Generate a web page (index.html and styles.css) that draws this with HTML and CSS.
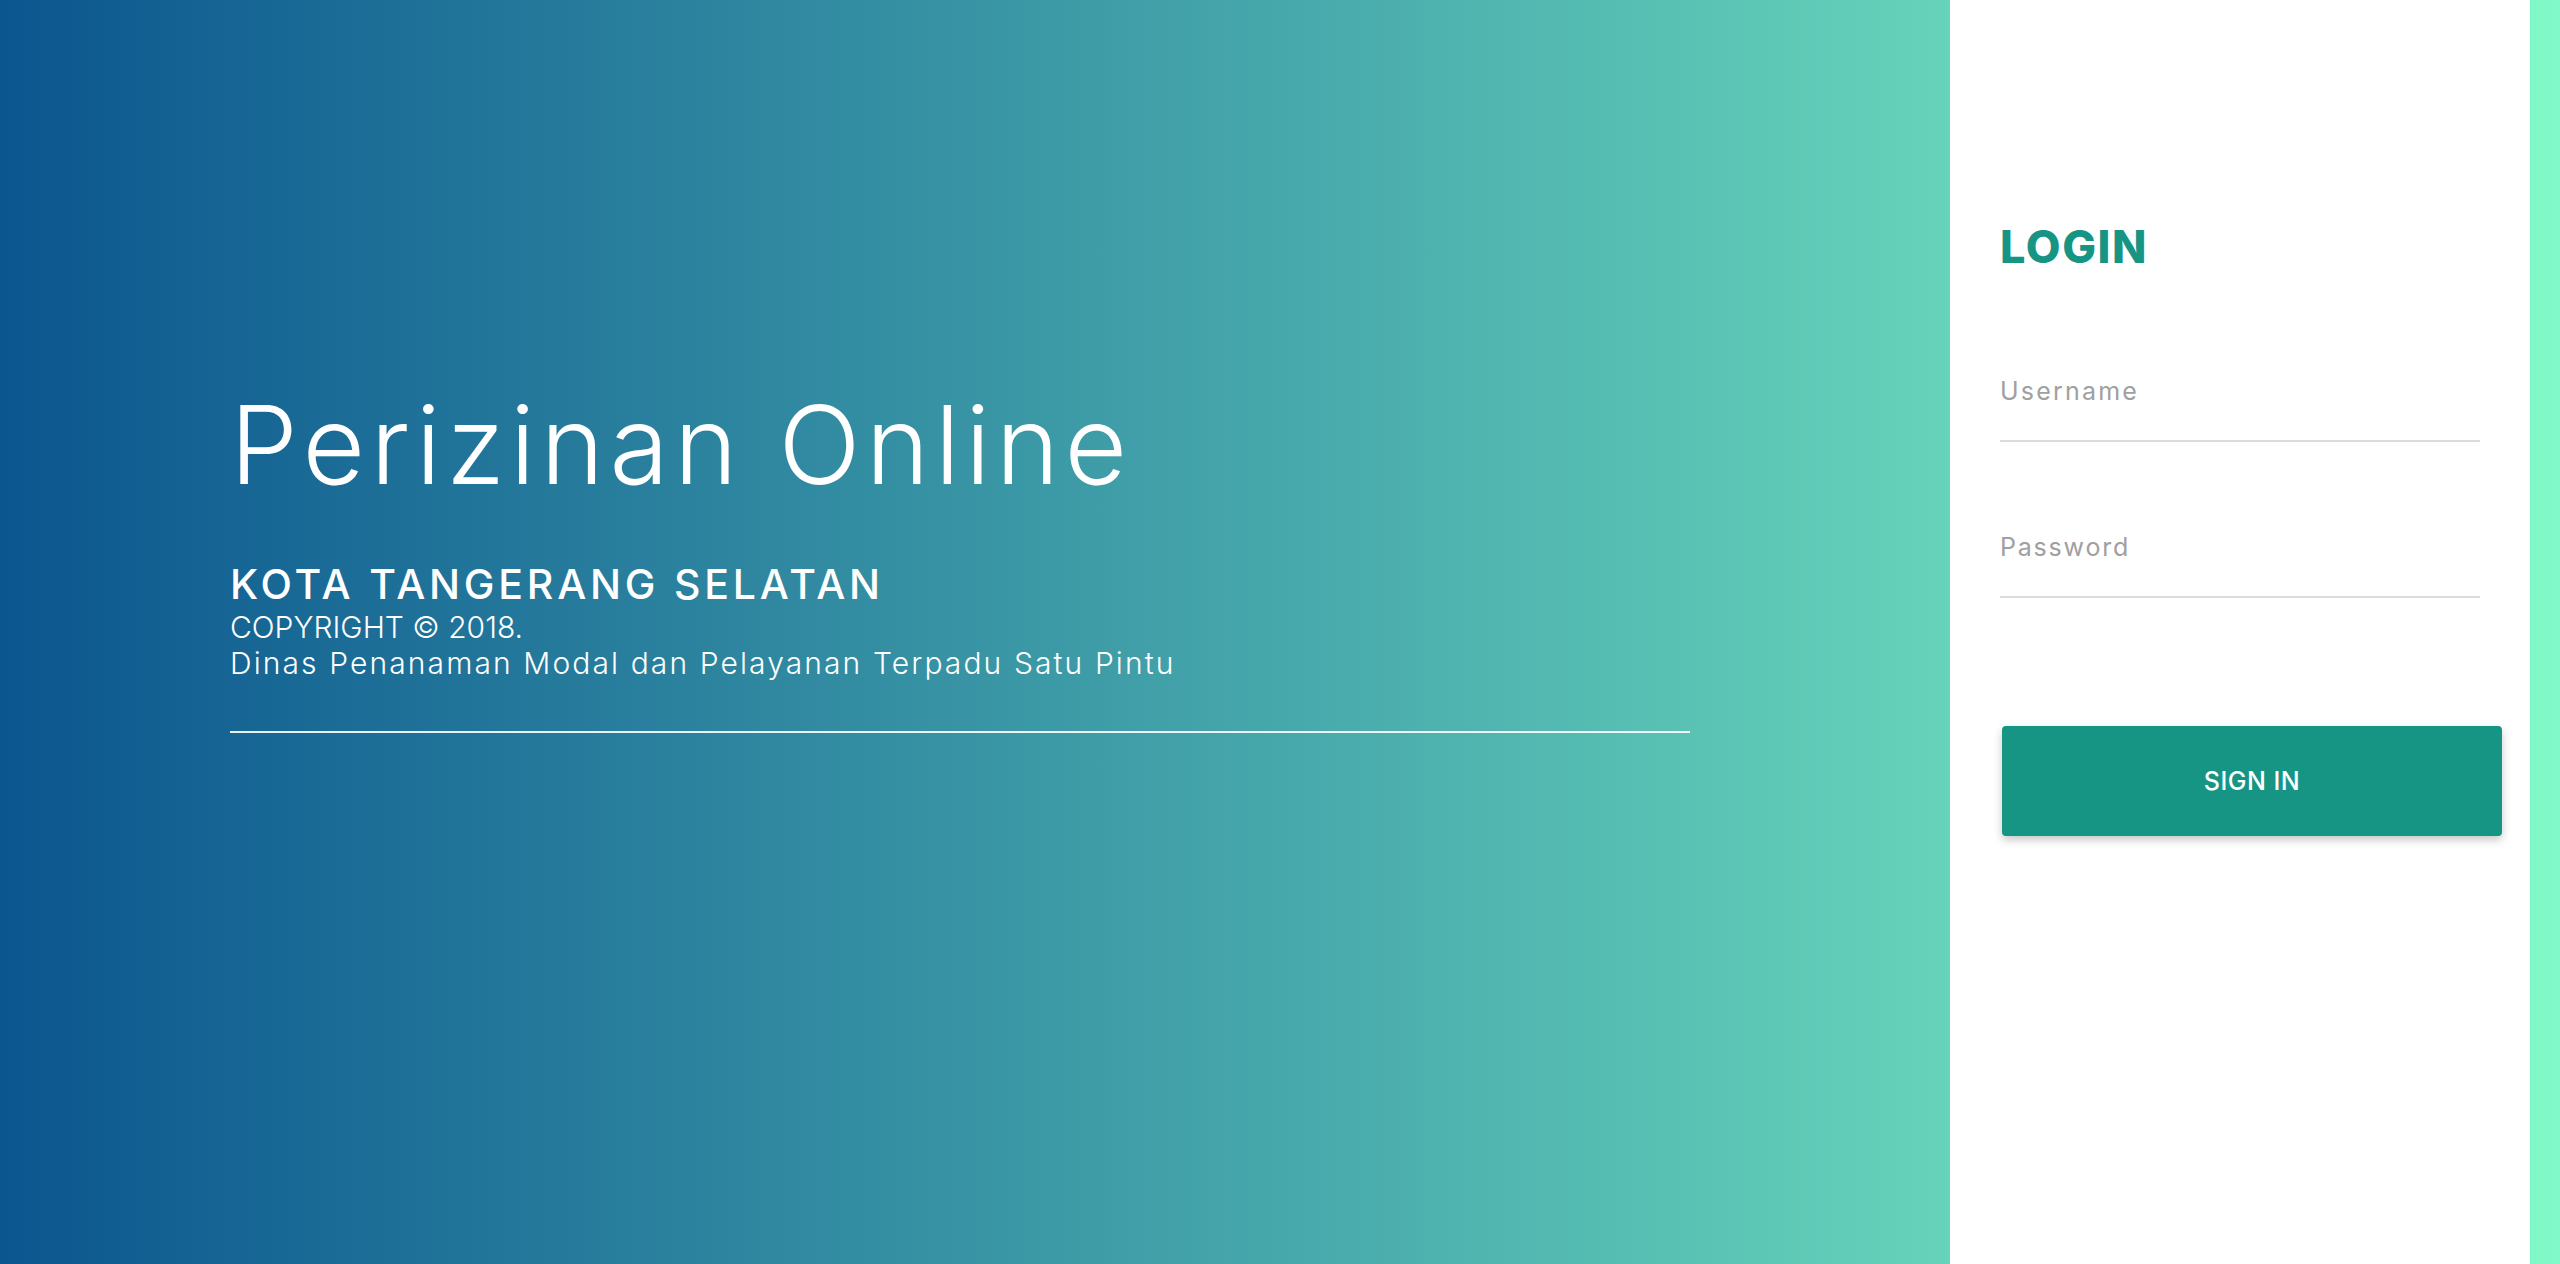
FILE: index.html
```html
<!DOCTYPE html>
<html lang="id">
<head>
<meta charset="utf-8">
<title>Perizinan Online - Login</title>
<link rel="stylesheet" href="styles.css">
</head>
<body>
<div class="page">
  <section class="hero">
    <div class="hero-inner">
      <h1 class="hero-title">Perizinan Online</h1>
      <div class="hero-city">KOTA TANGERANG SELATAN</div>
      <div class="hero-copy hero-copy-year">COPYRIGHT © 2018.</div>
      <div class="hero-copy">Dinas Penanaman Modal dan Pelayanan Terpadu Satu Pintu</div>
      <div class="hero-rule"></div>
    </div>
  </section>
  <aside class="panel">
    <h2 class="panel-title">LOGIN</h2>
    <form class="login-form">
      <input class="field field-user" type="text" placeholder="Username">
      <input class="field field-pass" type="password" placeholder="Password">
      <button class="btn" type="button">SIGN IN</button>
    </form>
  </aside>
</div>
</body>
</html>
```
FILE: styles.css
```css
* { box-sizing: border-box; }
html, body { margin: 0; padding: 0; height: 100%; }
body {
  font-family: Inter, "Noto Sans", "Liberation Sans", sans-serif;
  background: linear-gradient(to right, #0b568f 0%, #66d3ba 76.2%, #82f9c8 100%);
  overflow: hidden;
}
.page {
  display: flex;
  height: 1264px;
  padding-right: 30px;
}
.hero {
  flex: 1;
  display: flex;
  align-items: center;
  padding-left: 230px;
  padding-bottom: 151px;
  color: #fff;
}
.hero-inner { width: 1460px; }
.hero-title {
  margin: 0;
  font-size: 108px;
  line-height: 130px;
  font-weight: 300;
  letter-spacing: 5.3px;
}
.hero-city {
  margin-top: 49px;
  font-size: 41px;
  line-height: 50px;
  font-weight: 500;
  letter-spacing: 3.8px;
}
.hero-copy {
  font-size: 30px;
  line-height: 36px;
  font-weight: 300;
  letter-spacing: 2.1px;
}
.hero-copy-year { letter-spacing: 0; }
.hero-rule {
  margin-top: 50px;
  height: 2px;
  background: rgba(255,255,255,0.9);
}
.panel {
  width: 580px;
  background: #fff;
  padding: 220px 28px 0 50px;
}
.panel-title {
  margin: 0;
  font-size: 45px;
  line-height: 54px;
  font-weight: 800;
  color: #169584;
  letter-spacing: 1.6px;
}
.login-form {
  display: flex;
  flex-direction: column;
  align-items: flex-start;
  margin-top: 97px;
}
.field {
  display: block;
  width: 480px;
  height: 71px;
  padding: 0 0 29px 0;
  margin: 0 0 85px 0;
  border: 0;
  border-bottom: 2px solid #dcdcdc;
  font-family: inherit;
  font-size: 25px;
  line-height: 40px;
  letter-spacing: 1.8px;
  color: #333;
  background: transparent;
  outline: none;
}
.field-user { letter-spacing: 2.2px; }
.field::placeholder { color: #a0a0a0; opacity: 1; }
.field-pass { margin-bottom: 128px; }
.btn {
  margin-left: 2px;
  width: 500px;
  height: 110px;
  border: 0;
  border-radius: 4px;
  background: #169585;
  color: #fff;
  font-family: inherit;
  font-size: 25px;
  font-weight: 500;
  letter-spacing: 0.5px;
  box-shadow: 0 4px 8px rgba(0,0,0,0.22);
  cursor: pointer;
}
```
